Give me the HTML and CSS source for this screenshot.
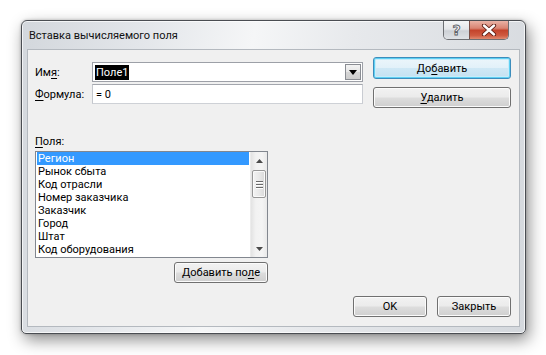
FILE: index.html
```html
<!DOCTYPE html>
<html lang="ru">
<head>
<meta charset="utf-8">
<title>Вставка вычисляемого поля</title>
<link rel="stylesheet" href="styles.css">
</head>
<body>
<div class="stage">
  <div class="window">
    <div class="titlebar">
      <span class="title">Вставка вычисляемого поля</span>
      <div class="caption-btns">
        <div class="cap help"><span>?</span></div>
        <div class="cap close">
          <svg width="16" height="12" viewBox="0 0 16 12">
            <path d="M3 1.5 L13 10.5 M13 1.5 L3 10.5" stroke="#5a1a10" stroke-width="4.2" stroke-linecap="round"/>
            <path d="M3 1.5 L13 10.5 M13 1.5 L3 10.5" stroke="#ffffff" stroke-width="2.4" stroke-linecap="round"/>
          </svg>
        </div>
      </div>
    </div>
    <div class="client">
      <div class="top">
        <div class="fields">
          <label class="lbl">Им<u>я</u>:</label>
          <div class="edit combo">
            <span class="sel">Поле1</span>
            <span class="drop"><svg width="8" height="5" viewBox="0 0 8 5"><path d="M0 0 H8 L4 5 Z" fill="#000"/></svg></span>
          </div>
          <label class="lbl"><u>Ф</u>ормула:</label>
          <div class="edit formula">= 0</div>
        </div>
        <div class="actions">
          <button class="btn default add">До<u>б</u>авить</button>
          <button class="btn del"><u>У</u>далить</button>
        </div>
      </div>
      <div class="list-label"><u>П</u>оля:</div>
      <div class="listbox">
        <ul class="items">
          <li class="selected">Регион</li>
          <li>Рынок сбыта</li>
          <li>Код отрасли</li>
          <li>Номер заказчика</li>
          <li>Заказчик</li>
          <li>Город</li>
          <li>Штат</li>
          <li>Код оборудования</li>
        </ul>
        <div class="scrollbar">
          <div class="arrow"><svg width="7" height="4" viewBox="0 0 7 4"><path d="M0 4 H7 L3.5 0 Z" fill="#4a4a4a"/></svg></div>
          <div class="track">
            <div class="thumb"><span></span><span></span><span></span></div>
          </div>
          <div class="arrow"><svg width="7" height="4" viewBox="0 0 7 4"><path d="M0 0 H7 L3.5 4 Z" fill="#4a4a4a"/></svg></div>
        </div>
      </div>
      <button class="btn addfield">Добавить по<u>л</u>е</button>
      <div class="footer">
        <button class="btn foot">OK</button>
        <button class="btn foot">Закрыть</button>
      </div>
    </div>
  </div>
</div>
</body>
</html>
```
FILE: styles.css
```css
* { box-sizing: border-box; }
html, body { margin: 0; padding: 0; background: #ffffff; }
body {
  font-family: Roboto, "Noto Sans", sans-serif;
  font-size: 11px;
  color: #000;
}
u { text-decoration: underline; text-underline-offset: 2px; }

.stage { padding: 20px 0 0 21px; width: 546px; height: 355px; }

.window {
  width: 505px;
  height: 314px;
  border: 1px solid #4a4d52;
  border-radius: 6px 6px 5px 5px;
  background: linear-gradient(100deg, #d3d7dc 0%, #e3e6ea 22%, #f5f6f7 42%, #e7e9ec 60%, #d4d8dd 100%);
  box-shadow: 3px 6px 16px rgba(0,0,0,0.45), 0 0 3px rgba(0,0,0,0.25), inset 0 0 0 1px rgba(255,255,255,0.7);
  padding: 0 5px 6px 5px;
  display: flex;
  flex-direction: column;
}

.titlebar {
  height: 28px;
  display: flex;
  align-items: flex-start;
}
.title {
  margin: 8px 0 0 2px;
  line-height: 14px;
  font-size: 11px;
  color: #111;
}
.caption-btns {
  margin-left: auto;
  margin-right: 11px;
  display: flex;
  border: 1px solid #6d6f73;
  border-top: none;
  border-radius: 0 0 5px 5px;
  overflow: hidden;
  height: 19px;
}
.cap { height: 18px; display: flex; align-items: center; justify-content: center; }
.help {
  width: 26px;
  background: linear-gradient(#f4f5f6 0%, #e4e6e9 45%, #cdd1d6 55%, #dfe2e6 100%);
  border-right: 1px solid #7a5048;
}
.help span {
  font-family: "DejaVu Sans", sans-serif;
  font-size: 14px;
  font-weight: bold;
  color: #f8f8f8;
  -webkit-text-stroke: 0.9px #5d6065;
  line-height: 14px;
}
.close {
  width: 38px;
  background: linear-gradient(#eab2a5 0%, #d98472 40%, #c4442c 52%, #cf5a40 80%, #e08a70 100%);
}

.client {
  flex: 1;
  background: #f0f0f0;
  border: 1px solid #b4b9bf;
  padding: 7px 8px 0 7px;
}

.top {
  display: flex;
  justify-content: space-between;
  height: 51px;
}
.fields {
  margin-top: 5px;
  display: grid;
  grid-template-columns: 57px 271px;
  grid-auto-rows: 20px;
  row-gap: 2px;
  align-items: center;
}
.lbl { line-height: 15px; }
.edit {
  height: 20px;
  background: #fff;
  border: 1px solid #abadb3;
  border-color: #a3a6ad #c9ccd2 #ced1d6 #c4c7cd;
  display: flex;
  align-items: center;
  padding-left: 2px;
}
.combo { border-color: #9da0a7; }
.sel {
  background: #000;
  color: #fff;
  line-height: 15px;
  padding: 0 1px;
}
.drop {
  margin-left: auto;
  margin-right: 1px;
  width: 16px;
  height: 16px;
  border: 1px solid #8a8d93;
  background: linear-gradient(#f3f3f3 0%, #e6e6e6 50%, #d6d6d6 51%, #cdcdcd 100%);
  display: flex;
  align-items: center;
  justify-content: center;
}
.formula { padding-left: 3px; }

.actions {
  width: 138px;
  display: flex;
  flex-direction: column;
  gap: 8px;
}
.btn {
  font-family: inherit;
  font-size: 11px;
  color: #000;
  border: 1px solid #707070;
  border-radius: 3px;
  background: linear-gradient(#f2f2f2 0%, #ebebeb 48%, #dddddd 52%, #cfcfcf 100%);
  box-shadow: inset 0 0 0 1px #fbfbfb;
  padding: 0;
  margin: 0;
  line-height: 15px;
}
.add { height: 22px; }
.del { height: 21px; }
.default {
  border-color: #3c8dbc;
  box-shadow: inset 0 0 0 1px #5fd0f3, inset 0 0 0 2px #c7ecfa;
  background: linear-gradient(#ecf6fb 0%, #e2f1f9 48%, #cfe8f5 52%, #c3e1f1 100%);
}

.list-label {
  margin-top: 26px;
  line-height: 15px;
  height: 15px;
  margin-bottom: 2px;
}
.listbox {
  width: 233px;
  height: 107px;
  border: 1px solid #82878f;
  background: #fff;
  display: flex;
}
.items {
  list-style: none;
  margin: 0;
  padding: 0 1px 0 1px;
  flex: 1;
}
.items li {
  height: 13px;
  line-height: 13px;
  padding-left: 1px;
  white-space: nowrap;
}
.items li.selected { background: #3399ff; color: #fff; }

.scrollbar {
  width: 17px;
  display: flex;
  flex-direction: column;
  background: linear-gradient(90deg, #e3e3e3 0%, #f2f2f2 30%, #f4f4f4 70%, #e9e9e9 100%);
  border-left: 1px solid #ececec;
}
.arrow {
  height: 17px;
  display: flex;
  align-items: center;
  justify-content: center;
}
.track { flex: 1; padding-top: 1px; }
.thumb {
  margin: 0 1px;
  height: 28px;
  border: 1px solid #979797;
  border-radius: 2px;
  background: linear-gradient(90deg, #f3f3f3 0%, #e9e9e9 50%, #d9d9d9 100%);
  box-shadow: inset 0 0 0 1px #fafafa;
  display: flex;
  flex-direction: column;
  align-items: center;
  justify-content: center;
  gap: 2px;
}
.thumb span { width: 7px; height: 1px; background: #6a6a6a; box-shadow: 0 1px 0 #fff; }

.addfield {
  display: block;
  margin: 4px 0 0 139px;
  width: 94px;
  height: 21px;
}

.footer {
  margin-top: 13px;
  display: flex;
  justify-content: flex-end;
  gap: 10px;
}
.foot { width: 74px; height: 21px; }
```
